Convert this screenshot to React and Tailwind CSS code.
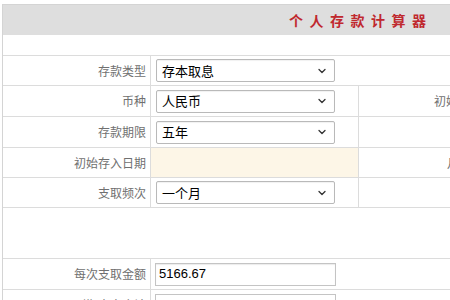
import React from "react";
import { ChevronDown } from "lucide-react";

const label = "text-[12px] text-[#707070] text-right";

function Select({ value }) {
  return (
    <div className="ml-[5px] w-[179px] h-[23px] border border-[#b9b9b9] rounded-[2px] bg-white flex items-center justify-between pl-[5px] pr-[6px] shadow-[inset_0_1px_1px_rgba(0,0,0,0.06)]">
      <span className="text-[13px] text-black">{value}</span>
      <ChevronDown size={12} strokeWidth={2.6} className="text-[#333]" />
    </div>
  );
}

function Row({ h, name, children, right, rightText, bg }) {
  return (
    <div className={`flex border-b border-[#dcdcdc] ${h}`}>
      <div className={`w-[148px] shrink-0 border-r border-[#dcdcdc] flex items-center justify-end pr-[4px] ${label}`}>
        {name}
      </div>
      <div className={`w-[208px] shrink-0 flex items-center ${right ? "border-r border-[#dcdcdc]" : ""} ${bg || ""}`}>
        {children}
      </div>
      {right && (
        <div className={`flex-1 flex items-center ${label}`}>
          <span className="pl-[75px]">{rightText}</span>
        </div>
      )}
    </div>
  );
}

export default function App() {
  return (
    <div
      className="w-[450px] h-[300px] overflow-hidden bg-white"
      style={{ fontFamily: '"Noto Sans CJK SC", "Liberation Sans", sans-serif' }}
    >
      <div className="mt-[4px] ml-[2px] w-[600px] border-t border-l border-[#d4d4d4]">
        <div className="h-[30px] bg-[#dedede] flex items-center pl-[286px]">
          <span className="text-[14px] font-bold text-[#c0282e] tracking-[6.5px]">个人存款计算器</span>
        </div>
        <div className="h-[21px] border-b border-[#dcdcdc]" />
        <Row h="h-[30px]" name="存款类型">
          <Select value="存本取息" />
        </Row>
        <Row h="h-[31px]" name="币种" right rightText="初始存入金额">
          <Select value="人民币" />
        </Row>
        <Row h="h-[31px]" name="存款期限" right rightText="">
          <Select value="五年" />
        </Row>
        <Row h="h-[30px]" name="初始存入日期" right rightText={<span className="pl-[13px]">月</span>} bg="bg-[#fdf6e7]" />
        <Row h="h-[30px]" name="支取频次" right rightText="">
          <Select value="一个月" />
        </Row>
        <div className="h-[51px] border-b border-[#dcdcdc]" />
        <Row h="h-[31px]" name="每次支取金额">
          <div className="ml-[4px] w-[181px] h-[23px] border border-[#c4c4c4] bg-white flex items-center pl-[3px] shadow-[inset_0_1px_1px_rgba(0,0,0,0.08)]">
            <span className="text-[13px] text-black" style={{ fontFamily: '"Liberation Sans", sans-serif' }}>5166.67</span>
          </div>
        </Row>
        <Row h="h-[31px]" name="到期本息合计">
          <div className="ml-[4px] w-[181px] h-[23px] border border-[#c4c4c4] bg-white" />
        </Row>
      </div>
    </div>
  );
}
